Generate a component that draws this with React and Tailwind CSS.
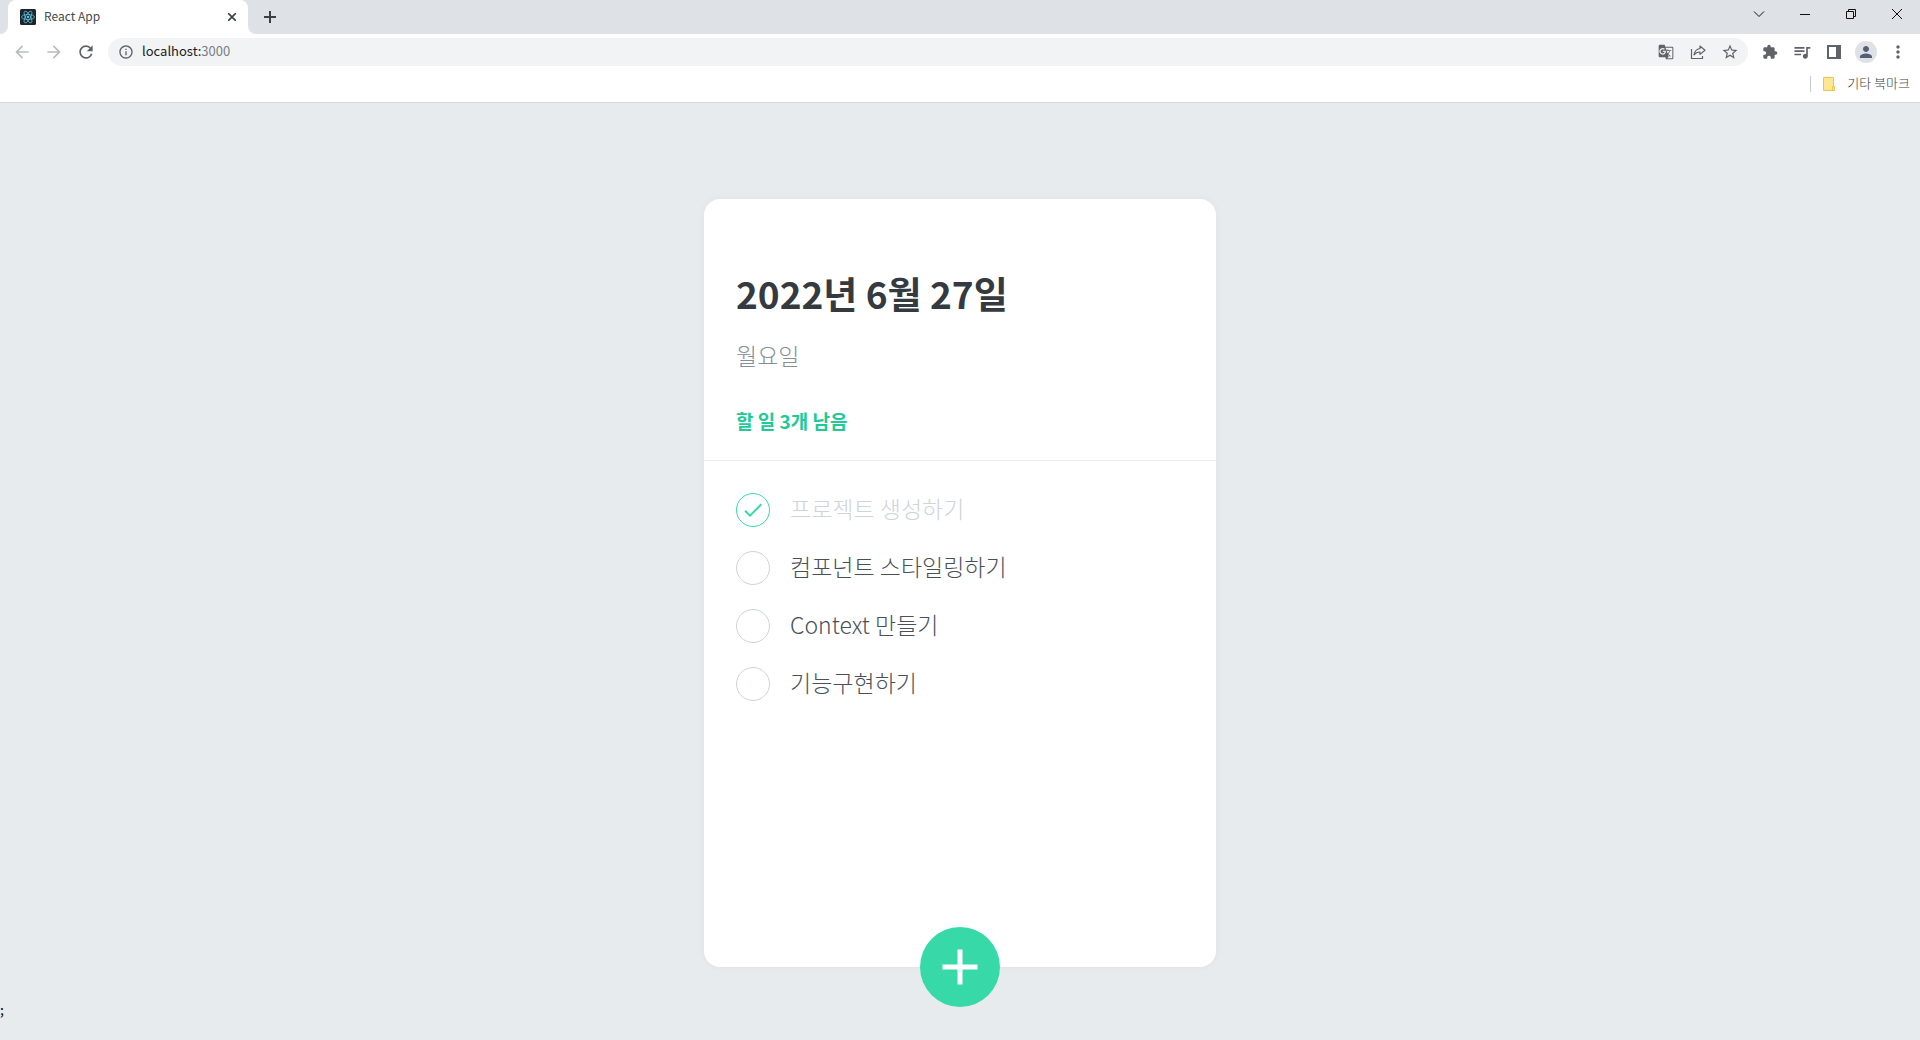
import { useState } from "react";
import {
  MdAdd,
  MdArrowBack,
  MdArrowForward,
  MdDone,
  MdExtension,
  MdGTranslate,
  MdInfoOutline,
  MdMoreVert,
  MdPerson,
  MdQueueMusic,
  MdRefresh,
  MdStarOutline,
} from "react-icons/md";

const initialTodos = [
  { id: 1, text: "프로젝트 생성하기", done: true },
  { id: 2, text: "컴포넌트 스타일링하기", done: false },
  { id: 3, text: "Context 만들기", done: false },
  { id: 4, text: "기능구현하기", done: false },
];

const ReactFavicon = () => (
  <svg viewBox="0 0 32 32" className="w-4 h-4 shrink-0">
    <rect width="32" height="32" rx="3" fill="#20232a" />
    <g fill="none" stroke="#53c1de" strokeWidth="1.6">
      <ellipse cx="16" cy="16" rx="13" ry="5" />
      <ellipse cx="16" cy="16" rx="13" ry="5" transform="rotate(60 16 16)" />
      <ellipse cx="16" cy="16" rx="13" ry="5" transform="rotate(120 16 16)" />
    </g>
    <circle cx="16" cy="16" r="2.6" fill="#53c1de" />
  </svg>
);

const ShareIcon = () => (
  <svg viewBox="0 0 16 16" className="w-4 h-4" fill="none" stroke="#5f6368" strokeWidth="1.2">
    <path d="M1.5 5v9.500h11V12" />
    <path d="M10 2l5 4.200-5 4.200V8C7.300 8 5.500 8.800 4 10.800 4.600 7.200 6.800 5 10 4.500z" strokeLinejoin="round" />
  </svg>
);

const SidePanelIcon = () => (
  <svg viewBox="0 0 14 14" className="w-[14px] h-[14px]">
    <path fill="#5f6368" fillRule="evenodd" d="M0 0h14v14H0zM2 2v10h7V2z" />
  </svg>
);

const FolderIcon = () => (
  <svg viewBox="0 0 12 14" className="w-3 h-[14px]">
    <path d="M.5.500h10v9h1v4H.5z" fill="#ffe694" stroke="#eac54f" />
    <path d="M9.500 13.500v-4h1.500" fill="none" stroke="#eac54f" />
  </svg>
);

const IconButton = ({ label, children }) => (
  <button aria-label={label} className="w-7 h-7 flex items-center justify-center rounded-full text-[#5f6368]">
    {children}
  </button>
);

const WindowButton = ({ label, children }) => (
  <button aria-label={label} className="w-[46px] h-7 flex items-center justify-center">
    <svg viewBox="0 0 10 10" className="w-[10px] h-[10px] overflow-visible" fill="none" stroke="#111">
      {children}
    </svg>
  </button>
);

const TabStrip = () => (
  <div className="flex h-[34px] pl-2 bg-[#dee1e6]">
    <div className="relative flex items-center w-60 pl-3 pr-2 bg-white rounded-t-lg">
      {/* Curved feet on both sides of the tab */}
      <svg viewBox="0 0 8 8" className="absolute -left-2 bottom-0 w-2 h-2">
        <path d="M8 0v8H0a8 8 0 0 0 8-8z" fill="#fff" />
      </svg>
      <svg viewBox="0 0 8 8" className="absolute -right-2 bottom-0 w-2 h-2">
        <path d="M0 0v8h8a8 8 0 0 1-8-8z" fill="#fff" />
      </svg>
      <ReactFavicon />
      <span className="ml-2 pb-0.5 flex-1 text-xs text-[#45494d]">React App</span>
      <button aria-label="Close tab" className="w-4 h-4 flex items-center justify-center">
        <svg viewBox="0 0 8 8" className="w-2 h-2" stroke="#3c4043" strokeWidth="1.6">
          <path d="M0 0l8 8M8 0L0 8" />
        </svg>
      </button>
    </div>
    <button aria-label="New tab" className="w-7 ml-2 flex items-center justify-center">
      <svg viewBox="0 0 12 12" className="w-3 h-3" stroke="#3c4043" strokeWidth="2">
        <path d="M6 0v12M0 6h12" />
      </svg>
    </button>
    <div className="ml-auto flex">
      <WindowButton label="Search tabs">
        <path d="M0 2.500l5 5 5-5" />
      </WindowButton>
      <WindowButton label="Minimize">
        <path d="M0 5.500h10" />
      </WindowButton>
      <WindowButton label="Restore">
        <path d="M.5 2.500h7v7h-7zM2.500 2.500v-2h7v7h-2" />
      </WindowButton>
      <WindowButton label="Close">
        <path d="M0 0l10 10M10 0L0 10" />
      </WindowButton>
    </div>
  </div>
);

const Toolbar = () => (
  <div className="flex items-center gap-1 h-9 px-2">
    <IconButton label="Back"><MdArrowBack className="w-5 h-5 text-[#babcbe]" /></IconButton>
    <IconButton label="Forward"><MdArrowForward className="w-5 h-5 text-[#babcbe]" /></IconButton>
    <IconButton label="Reload"><MdRefresh className="w-5 h-5" /></IconButton>
    <div className="flex flex-1 items-center gap-1 h-7 ml-1 mr-1 pl-[10px] pr-1 rounded-full bg-[#f1f3f4]">
      <MdInfoOutline className="w-4 h-4 text-[#5f6368]" />
      <a href="#" className="flex-1 ml-1 pb-0.5 text-[13px] text-[#202124]">
        localhost:<span className="text-[#7a7e82]">3000</span>
      </a>
      <IconButton label="Translate"><MdGTranslate className="w-4 h-4" /></IconButton>
      <IconButton label="Share"><ShareIcon /></IconButton>
      <IconButton label="Bookmark"><MdStarOutline className="w-[18px] h-[18px]" /></IconButton>
    </div>
    <IconButton label="Extensions"><MdExtension className="w-4 h-4" /></IconButton>
    <IconButton label="Media"><MdQueueMusic className="w-5 h-5" /></IconButton>
    <IconButton label="Side panel"><SidePanelIcon /></IconButton>
    <IconButton label="Profile">
      <span className="w-[22px] h-[22px] flex items-center justify-center rounded-full bg-[#dee1e6]">
        <MdPerson className="w-[18px] h-[18px] text-[#535f75]" />
      </span>
    </IconButton>
    <IconButton label="Menu"><MdMoreVert className="w-5 h-5" /></IconButton>
  </div>
);

const BookmarkBar = () => (
  <div className="flex items-center justify-end h-[33px] pr-[10px] pb-1 border-b border-[#d5d7da]">
    <span className="w-px h-4 mr-3 bg-[#c8cacd]" />
    <button className="flex items-center gap-3 text-[#3c4043]">
      <FolderIcon />
      <span className="pb-0.5 text-[13px] font-light">기타 북마크</span>
    </button>
  </div>
);

const TodoHead = ({ left }) => (
  <div className="pt-17 px-8 pb-[25px] border-b border-[#e9ecef]">
    <h1 className="text-[37px] leading-[52px] font-bold text-[#343a40]">2022년 6월 27일</h1>
    <div className="mt-5 text-[23px] leading-8 font-light text-[#868e96]">월요일</div>
    <div className="mt-9 text-[19px] leading-7 font-bold text-[#20c997]">할 일 {left}개 남음</div>
  </div>
);

const TodoItem = ({ todo, onToggle }) => (
  <li className="py-3">
    <label className="flex items-center cursor-pointer">
      <span className="grid mr-5 place-items-center">
        <input
          type="checkbox"
          checked={todo.done}
          onChange={() => onToggle(todo.id)}
          className="col-start-1 row-start-1 w-[34px] h-[34px] appearance-none rounded-full border border-[#ced4da] checked:border-[#38d9a9]"
        />
        {todo.done && <MdDone className="col-start-1 row-start-1 w-6 h-6 text-[#38d9a9] pointer-events-none" />}
      </span>
      <span className={`pb-1 text-[23px] leading-[30px] font-light ${todo.done ? "text-[#ced4da]" : "text-[#495057]"}`}>
        {todo.text}
      </span>
    </label>
  </li>
);

const App = () => {
  const [todos, setTodos] = useState(initialTodos);

  const handleToggle = (id) => {
    setTodos(todos.map((todo) => (todo.id === id ? { ...todo, done: !todo.done } : todo)));
  };

  return (
    <div className="flex flex-col min-h-screen bg-[#e7ebee] font-['Noto_Sans_CJK_KR',sans-serif]">
      <header className="bg-white">
        <TabStrip />
        <Toolbar />
        <BookmarkBar />
      </header>

      <main className="flex-1">
        <div className="relative flex flex-col w-full max-w-lg min-h-[768px] mx-auto mt-24 mb-7 bg-white rounded-2xl shadow-[0_0_8px_rgba(0,0,0,0.04)]">
          <TodoHead left={todos.filter((todo) => !todo.done).length} />
          <ul className="flex-1 px-8 pt-5 pb-12">
            {todos.map((todo) => (
              <TodoItem key={todo.id} todo={todo} onToggle={handleToggle} />
            ))}
          </ul>
          <button
            aria-label="할 일 추가"
            className="absolute bottom-0 left-1/2 w-20 h-20 -translate-x-1/2 translate-y-1/2 flex items-center justify-center rounded-full bg-[#38d9a9] text-white"
          >
            <MdAdd className="w-[60px] h-[60px]" />
          </button>
        </div>
        <p className="text-sm leading-7 text-black">;</p>
      </main>
    </div>
  );
};

export default App;
